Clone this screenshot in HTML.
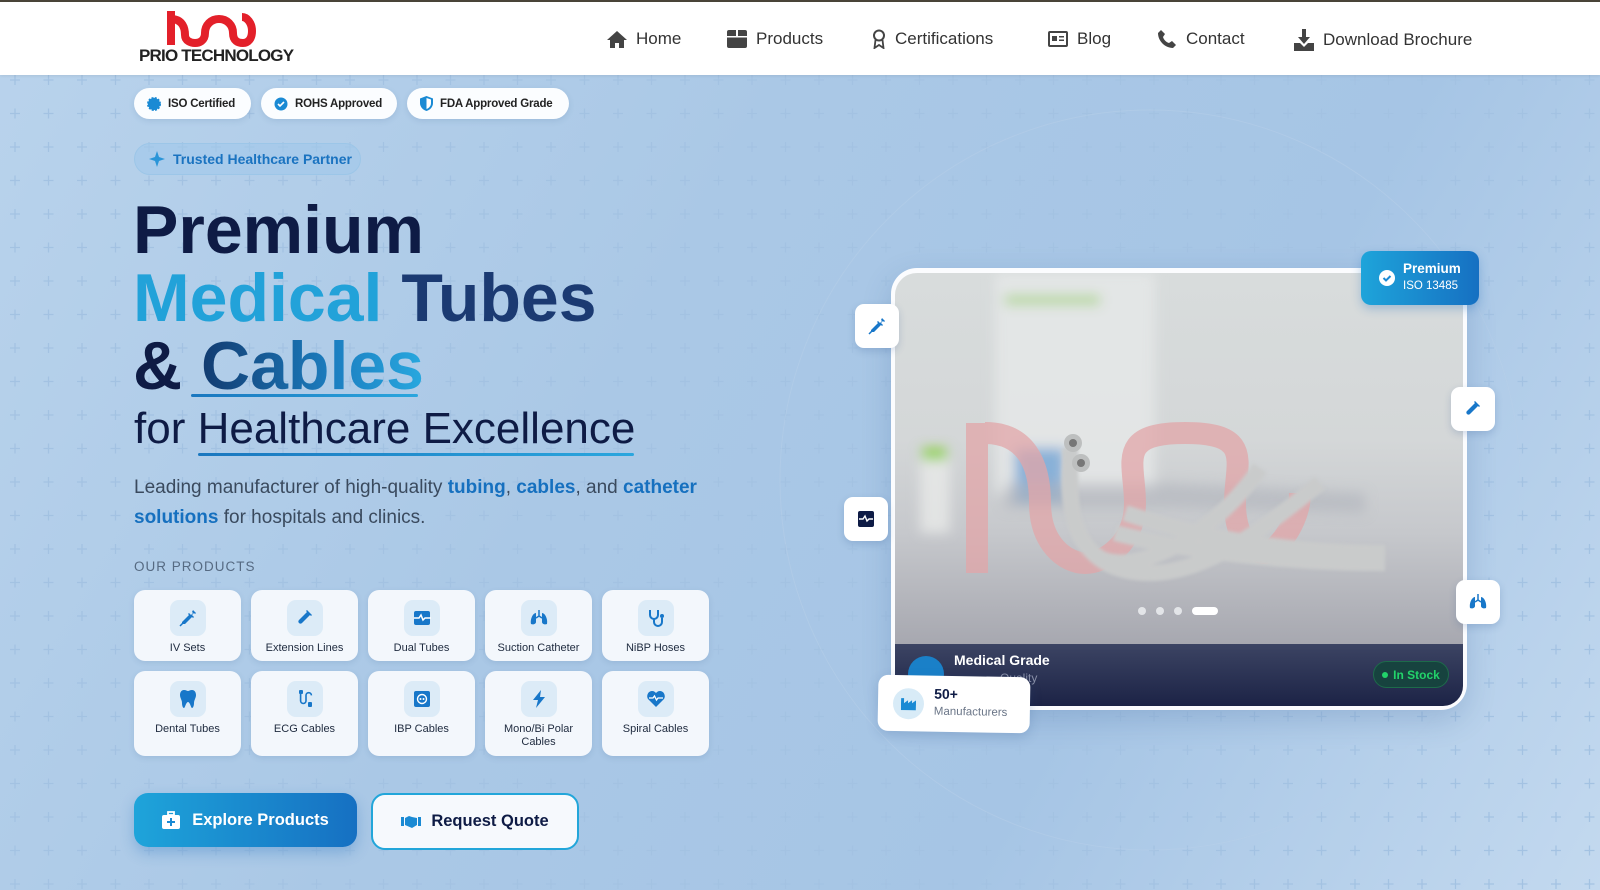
<!DOCTYPE html>
<html><head><meta charset="utf-8">
<style>
*{margin:0;padding:0;box-sizing:border-box}
body{width:1600px;height:890px;overflow:hidden;font-family:"Liberation Sans",sans-serif;position:relative;
background:linear-gradient(120deg,#b9d3ec 0%,#aac8e6 40%,#a6c5e5 70%,#c3d9ef 100%);}
.topline{position:absolute;left:0;top:0;width:1600px;height:2px;background:#4a4538}
nav{position:absolute;left:0;top:2px;width:1600px;height:73px;background:#fff;box-shadow:0 1px 3px rgba(0,0,0,.08)}
.logo{position:absolute;left:139px;top:9px}
.logotxt{position:absolute;left:139px;top:44px;font-size:17px;font-weight:bold;color:#222;letter-spacing:-.8px}
.nav-i{position:absolute;top:27px;font-size:17px;color:#333;display:flex;align-items:center;gap:9px}
.nav-i svg{fill:#444}
.pill{position:absolute;top:88px;height:31px;background:#fbfdff;border-radius:16px;font-size:11.5px;font-weight:bold;color:#222;display:flex;align-items:center;gap:7px;padding:0 13px;box-shadow:0 2px 6px rgba(60,100,150,.15);white-space:nowrap;letter-spacing:-.2px}
.trust{position:absolute;left:134px;top:143px;width:227px;height:32px;border-radius:16px;background:rgba(160,200,235,.6);border:1px solid #9cc6e8;color:#1a73c0;font-size:14px;font-weight:bold;display:flex;align-items:center;gap:8px;padding-left:14px}
h1{position:absolute;left:133px;top:196px;font-size:68px;line-height:68px;font-weight:bold;color:#0e1b45;letter-spacing:0}
.cy{color:#22a2d9}
.nv{color:#1b3a72}
.cab{background:linear-gradient(90deg,#123b70,#1c7fc1 60%,#28a8df);-webkit-background-clip:text;color:transparent}
.ul{position:absolute;height:3px;background:linear-gradient(90deg,#1a77bf,#2aa6de);border-radius:2px}
.sub{position:absolute;left:134px;top:404px;font-size:44px;color:#0e1b45;line-height:50px}
.para{position:absolute;left:134px;top:473px;font-size:19px;line-height:29.5px;color:#3a4a5e;width:600px}
.para b{color:#1670bf}
.op{position:absolute;left:134px;top:559px;font-size:13.5px;letter-spacing:1px;color:#566a82}
.card{position:absolute;width:107px;background:#f3f7fc;border-radius:11px;box-shadow:0 2px 6px rgba(60,100,150,.15);text-align:center;font-size:11px;color:#1e2a3e;line-height:13px}
.card .ic{width:36px;height:36px;border-radius:9px;background:#dcebf7;margin:10px auto 6px;display:flex;align-items:center;justify-content:center}
.card svg{fill:#1877c9}
.btn1{position:absolute;left:134px;top:793px;width:223px;height:54px;border-radius:14px;background:linear-gradient(90deg,#1ea4da,#1670c2);color:#fff;font-weight:bold;font-size:16.5px;display:flex;align-items:center;justify-content:center;gap:12px;box-shadow:0 6px 14px rgba(30,110,190,.3)}
.btn2{position:absolute;left:371px;top:793px;width:208px;height:57px;border-radius:14px;background:#f6f9fd;border:2px solid #22a6da;color:#0e1b45;font-weight:bold;font-size:16.5px;display:flex;align-items:center;justify-content:center;gap:10px}
.frame{position:absolute;left:891px;top:268px;width:576px;height:442px;border-radius:26px;background:#fbfcfe;box-shadow:0 10px 30px rgba(40,80,140,.2)}
.photo{position:absolute;left:895px;top:273px;width:568px;height:371px;border-radius:22px 22px 0 0;overflow:hidden;background:linear-gradient(180deg,#d8dcdc 0%,#d4d7d8 45%,#c6c8cc 70%,#a7a8b0 100%)}
.foot{position:absolute;left:895px;top:644px;width:568px;height:62px;border-radius:0 0 20px 20px;background:linear-gradient(180deg,#3c4463,#1c2346);overflow:hidden}
.fl{position:absolute;width:44px;height:44px;border-radius:9px;background:#fff;box-shadow:0 3px 8px rgba(40,80,140,.2);display:flex;align-items:center;justify-content:center}
.fl svg{fill:#1877c9}
</style></head><body>
<svg width="1600" height="890" style="position:absolute;left:0;top:0">
<defs><pattern id="p" x="4" y="2" width="33.5" height="33.5" patternUnits="userSpaceOnUse">
<path d="M11 6v10M6 11h10" stroke="#a3c2e2" stroke-width="1.3"/></pattern></defs>
<rect y="75" width="1600" height="815" fill="url(#p)"/>
<circle cx="1150" cy="480" r="370" fill="none" stroke="#b8d0ea" stroke-width="1" opacity=".5"/>
</svg>
<div class="topline"></div>
<nav>
<svg class="logo" width="125" height="36" viewBox="0 0 125 36"><g fill="none" stroke="#e3202a" stroke-width="8"><path d="M32 8c12 0 14 10 14 16 0 6 6 8 10 8s10-2 10-10c0-8 6-14 14-14s14 6 14 14c0 8 5 10 10 10s9-4 9-12c0-8-5-14-10-14"/></g><rect x="28" y="0" width="8" height="34" fill="#e3202a"/></svg>
<div class="logotxt">PRIO TECHNOLOGY</div>
<div class="nav-i" style="left:607px"><svg width="20" height="18" viewBox="0 0 20 18"><path d="M10 1L0 10h3v8h5v-5h4v5h5v-8h3z"/></svg>Home</div>
<div class="nav-i" style="left:727px"><svg width="20" height="20" viewBox="0 0 20 20"><rect x="0" y="1" width="20" height="18" rx="2"/><rect x="0" y="7" width="20" height="1.5" fill="#fff"/><rect x="9" y="1" width="2" height="6" fill="#fff"/></svg>Products</div>
<div class="nav-i" style="left:872px"><svg width="14" height="20" viewBox="0 0 14 20"><circle cx="7" cy="6.5" r="5" fill="none" stroke="#444" stroke-width="2"/><path d="M3.5 11l-1 8 4.5-3 4.5 3-1-8" fill="none" stroke="#444" stroke-width="1.8"/></svg>Certifications</div>
<div class="nav-i" style="left:1048px"><svg width="20" height="16" viewBox="0 0 20 16"><rect x="1" y="1" width="18" height="14" rx="1" fill="none" stroke="#444" stroke-width="2"/><rect x="4" y="5" width="5" height="5"/><rect x="11" y="5" width="5" height="1.5"/><rect x="11" y="8.5" width="5" height="1.5"/></svg>Blog</div>
<div class="nav-i" style="left:1157px"><svg width="20" height="20" viewBox="0 0 20 20"><path d="M4 1l4 4-2 3c1 3 3 5 6 6l3-2 4 4-3 3C8 19 1 12 1 4z"/></svg>Contact</div>
<div class="nav-i" style="left:1294px"><svg width="20" height="22" viewBox="0 0 20 22"><path d="M8 0h4v8h4l-6 7-6-7h4z"/><path d="M0 14h6l4 4 4-4h6v8H0z"/></svg>Download Brochure</div>
</nav>

<div class="pill" style="left:134px;width:117px"><svg width="14" height="14" viewBox="0 0 14 14"><circle cx="7" cy="7" r="6" fill="#1a8ad4" stroke="#1a8ad4" stroke-dasharray="2 1.2" stroke-width="2"/></svg>ISO Certified</div>
<div class="pill" style="left:261px;width:136px"><svg width="14" height="14" viewBox="0 0 14 14"><circle cx="7" cy="7" r="6.5" fill="#1a8ad4"/><path d="M4 7l2 2 4-4" stroke="#fff" stroke-width="1.6" fill="none"/></svg>ROHS Approved</div>
<div class="pill" style="left:407px;width:162px"><svg width="13" height="15" viewBox="0 0 13 15"><path d="M6.5 0L0 2.5V7c0 4 3 7 6.5 8 3.5-1 6.5-4 6.5-8V2.5z" fill="#1a8ad4"/><path d="M6.5 2v11c2.5-1 4.5-3 4.5-6V3.5z" fill="#fff"/></svg>FDA Approved Grade</div>

<div class="trust"><svg width="16" height="16" viewBox="0 0 16 16"><path d="M8 0l2 6 6 2-6 2-2 6-2-6-6-2 6-2z" fill="#2a95d8"/></svg>Trusted Healthcare Partner</div>

<h1>Premium<br><span class="cy">Medical</span> <span class="nv">Tubes</span><br>&amp; <span class="cab">Cables</span></h1>
<div class="ul" style="left:191px;top:394px;width:227px"></div>
<div class="sub">for Healthcare Excellence</div>
<div class="ul" style="left:198px;top:453px;width:436px;height:3px"></div>

<div class="para">Leading manufacturer of high-quality <b>tubing</b>, <b>cables</b>, and <b>catheter solutions</b> for hospitals and clinics.</div>
<div class="op">OUR PRODUCTS</div>

<div class="card" style="left:134px;top:590px;height:71px"><div class="ic"><svg width="18" height="18" viewBox="0 0 18 18"><path d="M14 1l3 3-1 1-1-1-2 2 2 2-1 1-1-1-7 7H3v-2l7-7-1-1 1-1 2 2 2-2-1-1z"/><path d="M1 17l3-3" stroke="#1877c9" stroke-width="1.5"/></svg></div>IV Sets</div>
<div class="card" style="left:251px;top:590px;height:71px"><div class="ic"><svg width="16" height="18" viewBox="0 0 16 18"><path d="M10 1l5 5-1 1-1-1-8 8c-2 2-5-1-3-3l8-8-1-1z"/></svg></div>Extension Lines</div>
<div class="card" style="left:368px;top:590px;height:71px"><div class="ic"><svg width="18" height="16" viewBox="0 0 18 16"><rect x="1" y="1" width="16" height="14" rx="2"/><path d="M1 8h5l2-3 2 5 2-2h6" stroke="#fff" stroke-width="1.5" fill="none"/></svg></div>Dual Tubes</div>
<div class="card" style="left:485px;top:590px;height:71px"><div class="ic"><svg width="18" height="16" viewBox="0 0 18 16"><path d="M9 0v7M9 6l-3 2M9 6l3 2" stroke="#1877c9" stroke-width="1.5"/><path d="M6 3C3 3 0 9 1 14c2 1 5 0 5-2zM12 3c3 0 6 6 5 11-2 1-5 0-5-2z"/></svg></div>Suction Catheter</div>
<div class="card" style="left:602px;top:590px;height:71px"><div class="ic"><svg width="16" height="18" viewBox="0 0 16 18"><path d="M2 1v5a4 4 0 008 0V1M6 10v3a4 4 0 008 0v-4" stroke="#1877c9" stroke-width="2" fill="none"/><circle cx="14" cy="7" r="2"/></svg></div>NiBP Hoses</div>

<div class="card" style="left:134px;top:671px;height:85px"><div class="ic"><svg width="16" height="18" viewBox="0 0 16 18"><path d="M4 0c2 0 3 1 4 1s2-1 4-1c3 0 4 3 4 5 0 3-2 5-2 8 0 3-1 5-2 5s-2-6-4-6-3 6-4 6-2-2-2-5C2 10 0 8 0 5c0-2 1-5 4-5z"/></svg></div>Dental Tubes</div>
<div class="card" style="left:251px;top:671px;height:85px"><div class="ic"><svg width="16" height="18" viewBox="0 0 16 18"><path d="M4 2v10a3 3 0 006 0V6a3 3 0 016 0" stroke="#1877c9" stroke-width="1.8" fill="none" transform="scale(.9)"/><rect x="2" y="0" width="4" height="4" rx="1"/><rect x="11" y="12" width="4" height="5" rx="1"/></svg></div>ECG Cables</div>
<div class="card" style="left:368px;top:671px;height:85px"><div class="ic"><svg width="16" height="16" viewBox="0 0 16 16"><rect x="0" y="0" width="16" height="16" rx="2"/><circle cx="8" cy="8" r="4.5" fill="none" stroke="#fff" stroke-width="1.4"/><circle cx="6.5" cy="8" r="1" fill="#fff"/><circle cx="9.5" cy="8" r="1" fill="#fff"/></svg></div>IBP Cables</div>
<div class="card" style="left:485px;top:671px;height:85px"><div class="ic"><svg width="12" height="18" viewBox="0 0 12 18"><path d="M8 0L0 10h5l-2 8 9-11H7z"/></svg></div>Mono/Bi Polar<br>Cables</div>
<div class="card" style="left:602px;top:671px;height:85px"><div class="ic"><svg width="18" height="16" viewBox="0 0 18 16"><path d="M9 16L1 8C-1 5 1 0 5 0c2 0 3 1 4 2 1-1 2-2 4-2 4 0 6 5 4 8z"/><path d="M2 7h4l1.5-2 2 4 1.5-2h5" stroke="#fff" stroke-width="1.3" fill="none"/></svg></div>Spiral Cables</div>

<div class="btn1"><svg width="18" height="18" viewBox="0 0 18 18"><path d="M6 1h6v3H6z" fill="none" stroke="#fff" stroke-width="1.8"/><rect x="0" y="4" width="18" height="14" rx="2" fill="#fff"/><path d="M9 7v8M5 11h8" stroke="#1a8ad4" stroke-width="2"/></svg>Explore Products</div>
<div class="btn2"><svg width="20" height="14" viewBox="0 0 20 14"><path d="M0 2h3v9H0zM17 2h3v9h-3zM4 3l4-2 3 1 5 1v7l-5 3-7-3z" fill="#1a8ad4"/></svg>Request Quote</div>

<div class="frame"></div>
<div class="photo">
<svg width="568" height="371" viewBox="0 0 568 371">
<defs><filter id="b1"><feGaussianBlur stdDeviation="6"/></filter><filter id="b2"><feGaussianBlur stdDeviation="1.5"/></filter></defs>
<g filter="url(#b1)">
<rect x="100" y="0" width="160" height="220" fill="#e6e9e8" opacity=".8"/>
<rect x="110" y="22" width="95" height="10" fill="#9fd27a" opacity=".7"/>
<rect x="25" y="180" width="30" height="80" fill="#e8eae8" opacity=".8"/>
<rect x="27" y="175" width="25" height="12" fill="#8fd24a"/>
<rect x="120" y="175" width="50" height="55" fill="#4c8fd0" opacity=".6"/>
<path d="M110 210h160l200 10v20l-200-5H110z" fill="#b0b4bc" opacity=".6"/>
</g>
<g fill="none" stroke="#e2a6a8" stroke-width="22" opacity=".75">
<path d="M82 150v150"/><path d="M90 160c40 0 55 30 55 70 0 40 25 60 45 60s50-20 50-60-20-70 50-70 50 30 50 70 20 50 30 50 35-30 35-60"/>
</g>
<g fill="none" stroke="#c9cbcb" stroke-width="16" filter="url(#b2)">
<path d="M175 175c0 60 0 90 30 110 40 20 120-30 160-90"/>
<path d="M175 190c-5 70 20 110 80 110 60 0 120-50 170-90"/>
<path d="M230 240c60 20 150 40 260 40"/>
<path d="M220 260c80 20 180 30 270 30"/>
</g>
<circle cx="178" cy="170" r="9" fill="#bdbfbf"/><circle cx="178" cy="170" r="4" fill="#777"/>
<circle cx="186" cy="190" r="9" fill="#bdbfbf"/><circle cx="186" cy="190" r="4" fill="#777"/>
<circle cx="247" cy="338" r="4" fill="#e3e5e8"/><circle cx="265" cy="338" r="4" fill="#e3e5e8"/><circle cx="283" cy="338" r="4" fill="#e3e5e8"/>
<rect x="297" y="334" width="26" height="8" rx="4" fill="#fff"/>
</svg></div>
<div class="foot">
<div style="position:absolute;left:13px;top:12px;width:36px;height:36px;border-radius:50%;background:#1a80c8"></div>
<div style="position:absolute;left:59px;top:8px;color:#fff;font-weight:bold;font-size:14px">Medical Grade</div>
<div style="position:absolute;left:105px;top:27px;color:#8a90a8;font-size:12px">Quality</div>
<div style="position:absolute;right:14px;top:17px;width:76px;height:27px;border-radius:14px;background:#17433f;border:1px solid #1d6b4a;color:#22d36a;font-size:12px;font-weight:bold;display:flex;align-items:center;justify-content:center;gap:5px"><span style="width:6px;height:6px;border-radius:50%;background:#22d36a"></span>In Stock</div>
</div>
<div style="position:absolute;left:1361px;top:251px;width:118px;height:54px;border-radius:10px;background:linear-gradient(90deg,#1ea4da,#1670c2);color:#fff;box-shadow:0 4px 10px rgba(30,110,190,.3)">
<svg style="position:absolute;left:18px;top:19px" width="16" height="16" viewBox="0 0 16 16"><circle cx="8" cy="8" r="8" fill="#fff"/><path d="M4.5 8l2.5 2.5 4.5-4.5" stroke="#1a8ad4" stroke-width="2" fill="none"/></svg>
<div style="position:absolute;left:42px;top:10px;font-weight:bold;font-size:13.5px">Premium</div>
<div style="position:absolute;left:42px;top:29px;font-size:11.5px">ISO 13485</div></div>
<div class="fl" style="left:855px;top:304px"><svg width="18" height="18" viewBox="0 0 18 18"><path d="M14 1l3 3-1 1-1-1-2 2 2 2-1 1-1-1-7 7H3v-2l7-7-1-1 1-1 2 2 2-2-1-1z"/><path d="M1 17l3-3" stroke="#1877c9" stroke-width="1.5"/></svg></div>
<div class="fl" style="left:1451px;top:387px"><svg width="16" height="18" viewBox="0 0 16 18"><path d="M10 1l5 5-1 1-1-1-8 8c-2 2-5-1-3-3l8-8-1-1z"/></svg></div>
<div class="fl" style="left:844px;top:497px"><svg width="16" height="16" viewBox="0 0 16 16"><rect width="16" height="16" rx="2" fill="#0e1b45"/><path d="M1 8h4l2-3 2 5 2-2h4" stroke="#fff" stroke-width="1.4" fill="none"/></svg></div>
<div class="fl" style="left:1456px;top:580px"><svg width="18" height="16" viewBox="0 0 18 16"><path d="M9 0v7M9 6l-3 2M9 6l3 2" stroke="#1877c9" stroke-width="1.5"/><path d="M6 3C3 3 0 9 1 14c2 1 5 0 5-2zM12 3c3 0 6 6 5 11-2 1-5 0-5-2z"/></svg></div>
<div style="position:absolute;left:878px;top:676px;width:152px;height:56px;border-radius:10px;background:#fff;box-shadow:0 4px 12px rgba(40,80,140,.2);transform:rotate(1deg)">
<div style="position:absolute;left:15px;top:13px;width:31px;height:31px;border-radius:50%;background:#d8ebf7"></div>
<svg style="position:absolute;left:23px;top:21px" width="15" height="14" viewBox="0 0 15 14"><path d="M0 14V2h3v5l4-3v3l4-3v3l4-3v10z" fill="#1a8ad4"/></svg>
<div style="position:absolute;left:56px;top:10px;font-weight:bold;font-size:14px;color:#0e1b45">50+</div>
<div style="position:absolute;left:56px;top:30px;font-size:11.5px;color:#6b7688">Manufacturers</div></div>
</body></html>
